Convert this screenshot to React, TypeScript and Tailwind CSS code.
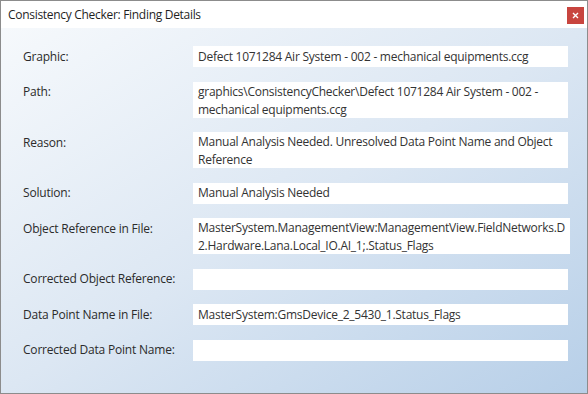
import React from "react";

type Row = {
  label: string;
  lines: string[];
};

const rows: Row[] = [
  { label: "Graphic:", lines: ["Defect 1071284 Air System - 002 - mechanical equipments.ccg"] },
  {
    label: "Path:",
    lines: ["graphics\\ConsistencyChecker\\Defect 1071284 Air System - 002 -", "mechanical equipments.ccg"],
  },
  {
    label: "Reason:",
    lines: ["Manual Analysis Needed. Unresolved Data Point Name and Object", "Reference"],
  },
  { label: "Solution:", lines: ["Manual Analysis Needed"] },
  {
    label: "Object Reference in File:",
    lines: ["MasterSystem.ManagementView:ManagementView.FieldNetworks.D", "2.Hardware.Lana.Local_IO.AI_1;.Status_Flags"],
  },
  { label: "Corrected Object Reference:", lines: [""] },
  { label: "Data Point Name in File:", lines: ["MasterSystem:GmsDevice_2_5430_1.Status_Flags"] },
  { label: "Corrected Data Point Name:", lines: [""] },
];

export default function App() {
  return (
    <div
      className="w-[588px] h-[394px] flex flex-col border border-[#8c8c8c] bg-white text-[12px] text-[#2b2b2b]"
      style={{ fontFamily: '"Segoe UI", "Open Sans", "Noto Sans", sans-serif' }}
    >
      {/* Title bar */}
      <div className="h-[27px] flex items-center justify-between pl-[7px] pr-[3px] bg-white">
        <span className="text-[12px] text-[#1f1f1f] tracking-[-0.3px]">Consistency Checker: Finding Details</span>
        <button className="w-[17px] h-[17px] mt-[2px] flex items-center justify-center bg-[#c8453f]">
          <svg width="7" height="7" viewBox="0 0 7 7">
            <path d="M1 1L6 6M6 1L1 6" stroke="#ffffff" strokeWidth="1.4" />
          </svg>
        </button>
      </div>

      {/* Body */}
      <div className="flex-1 bg-gradient-to-br from-[#f6f9fc] via-[#dce7f3] to-[#b7cfe8] pt-[18px] pl-[22px] pr-[19px]">
        <div className="flex flex-col gap-y-[14.5px]">
          {rows.map((row) => (
            <div key={row.label} className="flex items-start">
              <div className="w-[170px] shrink-0 h-[21px] flex items-center tracking-[-0.2px]">{row.label}</div>
              <div
                className={
                  row.lines.length > 1
                    ? "flex-1 h-[36px] bg-white px-[5px] pt-[1px] leading-[18px] whitespace-nowrap tracking-[-0.25px] text-[#333333]"
                    : "flex-1 h-[21px] bg-white px-[5px] flex items-center whitespace-nowrap tracking-[-0.25px] text-[#333333]"
                }
              >
                {row.lines.length > 1 ? (
                  row.lines.map((line, i) => <div key={i}>{line}</div>)
                ) : (
                  <span>{row.lines[0]}</span>
                )}
              </div>
            </div>
          ))}
        </div>
      </div>
    </div>
  );
}
